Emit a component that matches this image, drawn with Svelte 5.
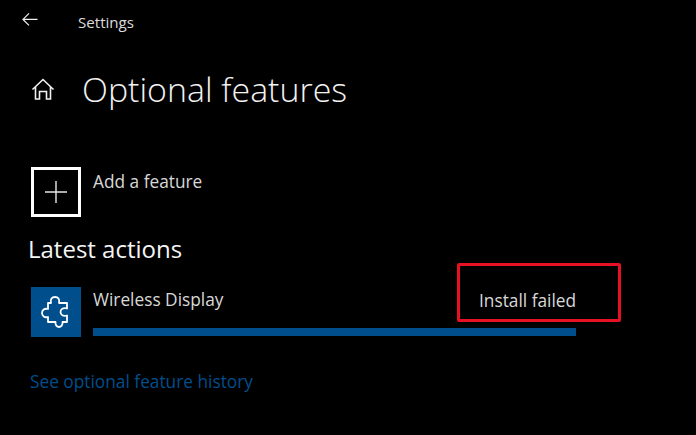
<script lang="ts">
	let title = 'Optional features';
</script>

<div class="page">
	<header class="topbar">
		<svg class="back" width="16" height="14" viewBox="0 0 16 14" aria-hidden="true">
			<path d="M7 0.4 L1 6.4 L7 12.4 M1 6.4 H15.5" fill="none" stroke="#f0f0f0" stroke-width="1.2" />
		</svg>
		<span class="app-name">Settings</span>
	</header>

	<div class="title-row">
		<svg class="home" width="24" height="24" viewBox="0 0 24 24" aria-hidden="true">
			<path
				d="M1.5 12.5 L12 2.5 L22.5 12.5 M4.5 10 V22 H8.5 V14.5 H15.5 V22 H19.5 V10"
				fill="none"
				stroke="#f0f0f0"
				stroke-width="1.6"
			/>
		</svg>
		<h1>{title}</h1>
	</div>

	<div class="add-row">
		<div class="add-box">
			<svg width="22" height="22" viewBox="0 0 22 22" aria-hidden="true">
				<path d="M11 0 V22 M0 11 H22" stroke="#e8e8e8" stroke-width="1.4" />
			</svg>
		</div>
		<span class="row-label">Add a feature</span>
	</div>

	<h2>Latest actions</h2>

	<div class="action-row">
		<div class="tile">
			<svg width="50" height="50" viewBox="0 0 50 50" aria-hidden="true">
				<path
					d="M20 16 C19 12 21 10 24 10 C27 10 29 12 28 16 L36 16 L36 21.5 C32 20.5 29.5 22 29.5 25 C29.5 28 32 29.5 36 28.5 L36 35 L31.5 35 C32 38 30 40 28 40 C26 40 24 38 24.5 35 L17 35 L17 30 C13.5 31 11 29 11 26 C11 23 13.5 21 17 22 L17 16 Z"
					fill="none"
					stroke="#fff"
					stroke-width="1.8"
					stroke-linejoin="round"
				/>
			</svg>
		</div>
		<div class="action-body">
			<div class="action-text">
				<span class="row-label">Wireless Display</span>
				<span class="status">Install failed</span>
			</div>
			<div class="bar"></div>
		</div>
	</div>

	<a class="history" href="#history">See optional feature history</a>

	<div class="highlight"></div>
</div>

<style>
	:global(body) {
		margin: 0;
		background: #000;
	}

	.page {
		position: relative;
		width: 696px;
		height: 435px;
		overflow: hidden;
		background: #000;
		color: #fff;
		font-family: 'Open Sans', 'Noto Sans', sans-serif;
	}

	.topbar {
		display: flex;
		align-items: center;
		height: 14px;
		padding: 13px 0 0 22px;
	}

	.back {
		display: block;
	}

	.app-name {
		margin-left: 40px;
		font-size: 15.1px;
		line-height: 18px;
		margin-top: 3px;
		color: #dcdcdc;
	}

	.title-row {
		display: flex;
		align-items: center;
		margin-top: 38px;
		padding-left: 31px;
		height: 48px;
	}

	h1 {
		margin: 0 0 0 27px;
		font-size: 33.9px;
		font-weight: 300;
		line-height: 48px;
		color: #f2f2f2;
		white-space: nowrap;
	}

	.add-row {
		display: flex;
		align-items: flex-start;
		margin-top: 54px;
		padding-left: 31px;
	}

	.add-box {
		display: flex;
		align-items: center;
		justify-content: center;
		box-sizing: border-box;
		width: 50px;
		height: 50px;
		border: 3px solid #fff;
	}

	.row-label {
		margin-left: 12px;
		font-size: 17.3px;
		line-height: 22px;
		color: #d8d8d8;
	}

	.add-row .row-label {
		margin-top: 4px;
	}

	h2 {
		margin: 16px 0 0 28px;
		font-size: 24px;
		font-weight: 400;
		line-height: 32px;
		color: #f5f5f5;
	}

	.action-row {
		display: flex;
		margin-top: 22px;
		padding-left: 31px;
	}

	.tile {
		display: flex;
		width: 50px;
		height: 50px;
		background: #004e8c;
	}

	.action-body {
		width: 495px;
		margin-left: 12px;
		padding-top: 2px;
	}

	.action-text {
		display: flex;
		justify-content: space-between;
		height: 39px;
	}

	.action-text .row-label {
		margin-left: 0;
	}

	.status {
		width: 109px;
		font-size: 17.3px;
		line-height: 22px;
		margin-top: 1px;
		color: #d8d8d8;
	}

	.bar {
		height: 8px;
		width: 483px;
		background: #004e8c;
	}

	.history {
		display: block;
		margin: 33px 0 0 30px;
		font-size: 17.3px;
		line-height: 24px;
		color: #004e8c;
		text-decoration: none;
	}

	/* red annotation drawn over the screenshot */
	.highlight {
		position: absolute;
		left: 457px;
		top: 263px;
		width: 158px;
		height: 53px;
		border: 3px solid #e81123;
		border-radius: 2px;
	}
</style>
